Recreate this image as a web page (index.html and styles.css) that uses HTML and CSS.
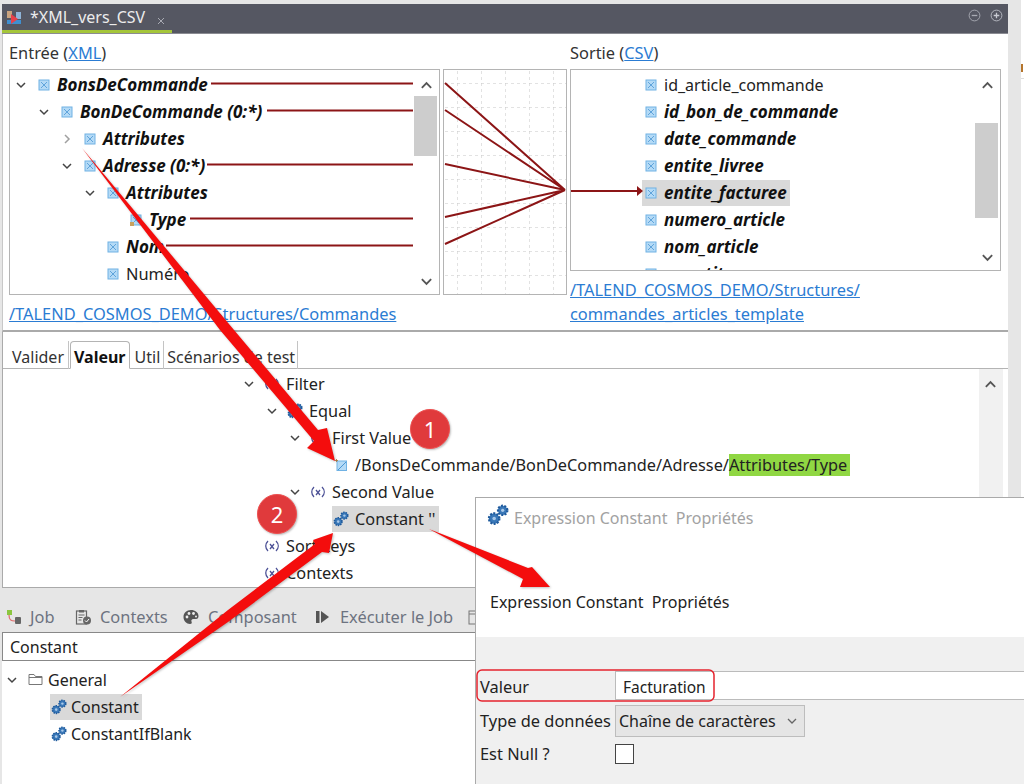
FILE: index.html
```html
<!DOCTYPE html>
<html lang="fr">
<head>
<meta charset="utf-8">
<title>XML_vers_CSV</title>
<link rel="stylesheet" href="styles.css">
</head>
<body>
<svg class="defs" aria-hidden="true">
  <symbol id="i-el" viewBox="0 0 12 12"><rect x="1" y="1" width="10" height="10" fill="#b4daf6" stroke="#70b2e4"/><path d="M3 3l6 6M9 3L3 9" stroke="#4a96d4" stroke-width=".8"/></symbol>
  <symbol id="i-attr" viewBox="0 0 12 12"><rect x="1" y="1" width="10" height="10" fill="#b4daf6" stroke="#70b2e4"/><path d="M3 3l6 6M9 3L3 9" stroke="#4a96d4" stroke-width=".8"/><rect y="8" width="4" height="4" fill="#c9a25e"/></symbol>
  <symbol id="i-leaf" viewBox="0 0 12 12"><rect x="2" y="2" width="9.500" height="9.500" fill="#b4daf6" stroke="#70b2e4"/><path d="M3 11l8-8" stroke="#4a96d4"/><path d="M0 1.500h3M1.500 0v3" stroke="#a8763a" stroke-width=".8"/></symbol>
  <symbol id="i-down" viewBox="0 0 12 12"><path d="M2 4l4 4 4-4" fill="none" stroke="#444" stroke-width="1.5"/></symbol>
  <symbol id="i-right" viewBox="0 0 12 12"><path d="M4 2l4 4-4 4" fill="none" stroke="#a0a0a0" stroke-width="1.5"/></symbol>
  <symbol id="i-gear" viewBox="0 0 16 16"><circle cx="5.200" cy="10.600" r="3.800" fill="#3a78b8" stroke="#1f5a9c" stroke-width="1.600" stroke-dasharray="1.400 1"/><circle cx="5.200" cy="10.600" r="1.300" fill="#a9c8e8"/><circle cx="11.400" cy="4.600" r="3.400" fill="#3a78b8" stroke="#1f5a9c" stroke-width="1.600" stroke-dasharray="1.400 1"/><circle cx="11.400" cy="4.600" r="1.200" fill="#a9c8e8"/></symbol>
  <symbol id="i-var" viewBox="0 0 16 12"><g fill="none" stroke="#4c5196" stroke-width="1.300"><path d="M4 1C1 4 1 8 4 11M12 1c3 3 3 7 0 10"/><path d="M6 4l4 5M10 4L6 9"/></g></symbol>
  <symbol id="i-up" viewBox="0 0 14 10"><path d="M2 8l5-5 5 5" fill="none" stroke="#555" stroke-width="2"/></symbol>
  <symbol id="i-dn" viewBox="0 0 14 10"><path d="M2 2l5 5 5-5" fill="none" stroke="#555" stroke-width="2"/></symbol>
</svg>

<div class="app">
  <div class="main">
    <div class="titlebar">
      <div class="editor-tab">
        <svg class="job-icon" viewBox="0 0 16 16"><rect x="1" y="1" width="5" height="7" fill="#c9a27e"/><rect x="10" y="2" width="5" height="7" fill="#8fb4d8"/><rect x="1" y="10" width="14" height="4" fill="#3f8fd0"/><path d="M5 4l7 5-7 5z" fill="#e8414a"/></svg>
        <span class="tab-name">*XML_vers_CSV</span>
        <svg class="tab-close" viewBox="0 0 8 8"><path d="M1 1l6 6M7 1L1 7" stroke="#a9abb3" stroke-width="1"/></svg>
      </div>
      <div class="win-btns">
        <svg class="win-btn" viewBox="0 0 14 14"><circle cx="7" cy="7" r="5.800" fill="none" stroke="#a8aab2"/><path d="M4 7h6" stroke="#a8aab2" stroke-width="1.400"/></svg>
        <svg class="win-btn" viewBox="0 0 14 14"><circle cx="7" cy="7" r="5.800" fill="none" stroke="#b8bac2"/><path d="M4 7h6M7 4v6" stroke="#c8cad2" stroke-width="1.400"/></svg>
      </div>
    </div>

    <section class="mapper">
      <div class="side side-in">
        <h2 class="side-title">Entrée (<a class="link">XML</a>)</h2>
        <div class="tree-box box-in">
          <div class="rows">
            <div class="row l0 mapped"><svg class="chev"><use href="#i-down"/></svg><div class="item"><svg class="el"><use href="#i-el"/></svg><span>BonsDeCommande</span></div></div>
            <div class="row l1 mapped"><svg class="chev"><use href="#i-down"/></svg><div class="item"><svg class="el"><use href="#i-el"/></svg><span>BonDeCommande (0:*)</span></div></div>
            <div class="row l2 mapped"><svg class="chev"><use href="#i-right"/></svg><div class="item"><svg class="el"><use href="#i-el"/></svg><span>Attributes</span></div></div>
            <div class="row l2 mapped"><svg class="chev"><use href="#i-down"/></svg><div class="item"><svg class="el"><use href="#i-el"/></svg><span>Adresse (0:*)</span></div></div>
            <div class="row l3 mapped"><svg class="chev"><use href="#i-down"/></svg><div class="item"><svg class="el"><use href="#i-el"/></svg><span>Attributes</span></div></div>
            <div class="row l4 mapped"><span class="chev"></span><div class="item"><svg class="el"><use href="#i-attr"/></svg><span>Type</span></div></div>
            <div class="row l3 mapped"><span class="chev"></span><div class="item"><svg class="el"><use href="#i-el"/></svg><span>Nom</span></div></div>
            <div class="row l3"><span class="chev"></span><div class="item"><svg class="el"><use href="#i-el"/></svg><span>Numéro</span></div></div>
          </div>
          <div class="scrollbar">
            <svg class="sb-arrow sb-up"><use href="#i-up"/></svg>
            <div class="thumb thumb-in"></div>
            <svg class="sb-arrow sb-dn"><use href="#i-dn"/></svg>
          </div>
        </div>
        <a class="link path">/TALEND_COSMOS_DEMO/Structures/Commandes</a>
      </div>

      <div class="map-box">
        <svg class="grid" width="122" height="224"><defs><pattern id="cell" width="24" height="24" patternUnits="userSpaceOnUse" x="13" y="13"><path d="M0 0H24M0 0V24" stroke="#c6c6c6" stroke-dasharray="3 3" fill="none"/></pattern></defs><rect width="122" height="224" fill="url(#cell)"/></svg>
      </div>

      <div class="side side-out">
        <h2 class="side-title">Sortie (<a class="link">CSV</a>)</h2>
        <div class="tree-box box-out">
          <div class="rows">
            <div class="row l2 plain"><span class="chev"></span><div class="item"><svg class="el"><use href="#i-el"/></svg><span>id_article_commande</span></div></div>
            <div class="row l2 mapped"><span class="chev"></span><div class="item"><svg class="el"><use href="#i-el"/></svg><span>id_bon_de_commande</span></div></div>
            <div class="row l2 mapped"><span class="chev"></span><div class="item"><svg class="el"><use href="#i-el"/></svg><span>date_commande</span></div></div>
            <div class="row l2 mapped"><span class="chev"></span><div class="item"><svg class="el"><use href="#i-el"/></svg><span>entite_livree</span></div></div>
            <div class="row l2 mapped"><span class="chev"></span><div class="item sel"><svg class="el"><use href="#i-el"/></svg><span>entite_facturee</span></div></div>
            <div class="row l2 mapped"><span class="chev"></span><div class="item"><svg class="el"><use href="#i-el"/></svg><span>numero_article</span></div></div>
            <div class="row l2 mapped"><span class="chev"></span><div class="item"><svg class="el"><use href="#i-el"/></svg><span>nom_article</span></div></div>
            <div class="row l2 mapped"><span class="chev"></span><div class="item"><svg class="el"><use href="#i-el"/></svg><span>quantite</span></div></div>
          </div>
          <div class="scrollbar">
            <svg class="sb-arrow sb-up"><use href="#i-up"/></svg>
            <div class="thumb thumb-out"></div>
            <svg class="sb-arrow sb-dn"><use href="#i-dn"/></svg>
          </div>
        </div>
        <a class="link path path-out">/TALEND_COSMOS_DEMO/Structures/<br>commandes_articles_template</a>
      </div>
    </section>

    <section class="lower">
      <div class="tabs">
        <span class="tab">Valider</span>
        <span class="tab active">Valeur</span>
        <span class="tab tab-util">Util</span>
        <span class="tab tab-scen">Scénarios de test</span>
      </div>
      <div class="lower-body">
        <div class="rows lower-rows">
          <div class="row f0"><svg class="chev"><use href="#i-down"/></svg><div class="item"><svg class="var"><use href="#i-var"/></svg><span>Filter</span></div></div>
          <div class="row f1"><svg class="chev"><use href="#i-down"/></svg><div class="item"><svg class="gear"><use href="#i-gear"/></svg><span>Equal</span></div></div>
          <div class="row f2"><svg class="chev"><use href="#i-down"/></svg><div class="item"><svg class="var"><use href="#i-var"/></svg><span>First Value</span></div></div>
          <div class="row f3"><span class="chev"></span><div class="item"><svg class="el"><use href="#i-leaf"/></svg><span>/BonsDeCommande/BonDeCommande/Adresse/<mark class="hl">Attributes/Type</mark></span></div></div>
          <div class="row f2"><svg class="chev"><use href="#i-down"/></svg><div class="item"><svg class="var"><use href="#i-var"/></svg><span>Second Value</span></div></div>
          <div class="row f3"><span class="chev"></span><div class="item sel"><svg class="gear"><use href="#i-gear"/></svg><span>Constant ''</span></div></div>
          <div class="row f0"><span class="chev"></span><div class="item"><svg class="var"><use href="#i-var"/></svg><span>Sort keys</span></div></div>
          <div class="row f0"><span class="chev"></span><div class="item"><svg class="var"><use href="#i-var"/></svg><span>Contexts</span></div></div>
        </div>
        <div class="lower-scroll"><svg class="sb-arrow sb-up"><use href="#i-up"/></svg></div>
      </div>
    </section>

    <nav class="views">
      <span class="view"><svg class="view-icon" viewBox="0 0 16 16"><rect x="2" y="1" width="5" height="5" fill="#8cc63f"/><path d="M4 6c0 5 2 6 6 6" fill="none" stroke="#e06a6a" stroke-width="1.200"/><rect x="10" y="8" width="6" height="7" rx="1" fill="#666"/></svg>Job</span>
      <span class="view"><svg class="view-icon" viewBox="0 0 16 16"><rect x="1.500" y="2" width="10" height="13" fill="none" stroke="#666" stroke-width="1.200"/><rect x="4" y="1" width="5" height="2.500" fill="#666"/><path d="M3.500 6h6M3.500 8.500h4M3.500 11h3" stroke="#666"/><circle cx="12" cy="11.500" r="4" fill="#666"/><path d="M10 11.500l1.500 1.500 2.500-3" fill="none" stroke="#fff"/></svg>Contexts</span>
      <span class="view"><svg class="view-icon" viewBox="0 0 16 16"><path d="M8 1C3.500 1 .5 4 .5 8s3 7 6.500 7c2 0 2-1.500 1.500-2.500S8.500 10 10.500 10h2.500c2 0 2.500-1.500 2.500-3C15.500 3.500 12 1 8 1z" fill="#555"/><circle cx="4" cy="8" r="1.400" fill="#eee"/><circle cx="6" cy="4.500" r="1.400" fill="#eee"/><circle cx="10.500" cy="4.500" r="1.400" fill="#eee"/><circle cx="13" cy="7.500" r="1" fill="#eee"/></svg>Composant</span>
      <span class="view"><svg class="view-icon" viewBox="0 0 16 16"><rect x="1" y="2" width="3.500" height="12" fill="#555"/><path d="M6 2l8 6-8 6z" fill="#555"/></svg>Exécuter le Job</span>
      <span class="view"><svg class="view-icon" viewBox="0 0 16 16"><rect x="2" y="2" width="11" height="13" fill="none" stroke="#777"/><path d="M2 5h11" stroke="#777"/></svg></span>
    </nav>

    <div class="palette">
      <div class="search">Constant</div>
      <div class="rows palette-rows">
        <div class="row p0"><svg class="chev"><use href="#i-down"/></svg><svg class="folder" viewBox="0 0 15 13"><path d="M1 11.500V1.500h5l1.500 2H14v8z" fill="none" stroke="#777"/><path d="M1 4.500h13" stroke="#777"/></svg><span>General</span></div>
        <div class="row p1"><div class="item sel"><svg class="gear"><use href="#i-gear"/></svg><span>Constant</span></div></div>
        <div class="row p1"><div class="item"><svg class="gear"><use href="#i-gear"/></svg><span>ConstantIfBlank</span></div></div>
      </div>
    </div>
  </div>

  <aside class="edge"><div class="edge-card"><span class="edge-mark"></span><span class="edge-line"></span></div></aside>

  <div class="dialog">
    <header class="dlg-head">
      <div class="dlg-title"><svg class="dlg-icon"><use href="#i-gear"/></svg><span>Expression Constant&nbsp; Propriétés</span></div>
      <div class="dlg-sub">Expression Constant&nbsp; Propriétés</div>
    </header>
    <div class="dlg-form">
      <label class="f-label f-first">Valeur</label>
      <div class="f-input">Facturation</div>
      <label class="f-label">Type de données</label>
      <div class="f-select"><span>Chaîne de caractères</span><svg class="f-chev" viewBox="0 0 12 12"><path d="M2 4l4 4 4-4" fill="none" stroke="#666" stroke-width="1.300"/></svg></div>
      <label class="f-label">Est Null ?</label>
      <div class="f-check"></div>
    </div>
  </div>

  <svg class="annot" width="1024" height="784" viewBox="0 0 1024 784" aria-hidden="true">
    <g class="links">
      <path d="M211 83.500H413M267 110.500H413M207 164.500H413M190 218.500H413M166 245.500H413"/>
      <path d="M445 83L565 190M445 110L565 190M445 164L565 190M445 217L565 190M445 244L565 190"/>
      <path d="M571 191H638"/>
    </g>
    <path class="head" d="M637 186l6 5-6 5z"/>
    <rect class="focus" x="477" y="670" width="237" height="31" rx="5"/>
    <g class="arrows">
      <polygon points="82,148 234,330 318,430 327,428 335,461 307,448 314,441 220,330"/>
      <polygon points="120,697 228,610 315,544 313,540 333,533 329,553 322,552 228,622"/>
      <polygon points="429,529 528,568 532,567 550,587 520,587 523,579"/>
    </g>
  </svg>
  <span class="badge badge-1">1</span>
  <span class="badge badge-2">2</span>
</div>
</body>
</html>
```

FILE: styles.css
```css
* { box-sizing: border-box; }
html, body { margin: 0; padding: 0; }
body { width: 1024px; height: 784px; overflow: hidden; background: #fff; font: 16.4px/20px "Noto Sans", sans-serif; color: #222; }
.defs { position: absolute; width: 0; height: 0; }
.app { position: relative; display: flex; width: 1024px; height: 784px; overflow: hidden; }
.main { width: 1008px; height: 784px; padding-top: 4px; padding-left: 2px; background: #e6e6e6; display: flex; flex-direction: column; }
.edge { flex: 1; background: #e6e6e6; padding-left: 13px; }
.edge-card { height: 100%; background: #fff; position: relative; }
.edge-mark { position: absolute; top: 64px; left: 0; width: 2px; height: 8px; background: #b5752c; }
.edge-line { position: absolute; top: 78px; left: 0; right: 0; height: 1px; background: #ddd; }

.titlebar { height: 30px; background: #555762; display: flex; justify-content: space-between; border-bottom: 1px solid #8a8b92; }
.editor-tab { width: 170px; height: 29px; border-bottom: 3px solid #a5c63a; display: flex; align-items: center; padding-left: 4px; }
.job-icon { width: 16px; height: 16px; margin-top: 2px; }
.tab-name { margin-left: 8px; font-size: 16px; color: #ececec; white-space: nowrap; }
.tab-close { width: 8px; height: 8px; margin: 7px 0 0 12px; }
.win-btns { display: flex; gap: 9px; padding: 5px 5px 0 0; }
.win-btn { width: 13px; height: 13px; }

.mapper { height: 298px; background: #fff; display: flex; padding: 0 0 0 6px; border-left: 1px solid #c8c8c8; border-bottom: 2px solid #aaa; }
.side-title { margin: 0; height: 35px; padding-top: 9px; font: inherit; color: #333; }
.link { color: #2b7cd3; text-decoration: underline; }
.side-in { width: 431px; }
.side-out { width: 431px; margin-left: 3px; }
.tree-box { position: relative; border: 1px solid #b4b4b4; display: flex; overflow: hidden; }
.tree-box .rows { padding-top: 1px; }
.box-in { height: 226px; }
.box-out { height: 202px; }
.path { display: block; margin-top: 9px; white-space: nowrap; line-height: 20px; }
.path-out { margin-top: 7px; line-height: 24px; }
.map-box { width: 124px; height: 226px; margin: 35px 0 0 3px; border: 1px solid #b4b4b4; }
.grid { display: block; }

.rows { flex: 1; min-width: 0; }
.row { height: 27px; display: flex; align-items: center; white-space: nowrap; color: #222; }
.chev { flex: none; width: 16px; height: 12px; display: block; }
.item { height: 26px; display: flex; align-items: center; margin-left: 6px; padding: 0 3px; }
.item.sel { background: #d9d9d9; }
.el { flex: none; width: 12px; height: 12px; margin-right: 7px; }
.var { flex: none; width: 16px; height: 12px; margin: 0 6px 0 -2px; }
.gear { flex: none; width: 16px; height: 16px; margin: 0 6px 0 -2px; }
.mapped { font-style: italic; font-weight: 700; font-size: 17px; color: #111; }
.plain { font-size: 16px; }
.l0 { padding-left: 3px; }
.l1 { padding-left: 26px; }
.l2 { padding-left: 49px; }
.l3 { padding-left: 72px; }
.l4 { padding-left: 95px; }

.scrollbar { flex: none; width: 23px; margin: 1px 2px 1px 0; background: #fff; position: relative; }
.thumb { position: absolute; left: 0; right: 0; background: #cdcdcd; }
.thumb-in { top: 25px; height: 60px; }
.thumb-out { top: 52px; height: 95px; }
.sb-arrow { position: absolute; left: 6px; width: 13px; height: 10px; }
.sb-up { top: 9px; }
.sb-dn { bottom: 6px; }

.lower { height: 256px; background: #fff; border-left: 1px solid #aaa; border-bottom: 1px solid #aaa; display: flex; flex-direction: column; }
.tabs { height: 37px; padding: 9px 0 0 5px; display: flex; border-bottom: 1px solid #b4b4b4; font-size: 16px; }
.tab { height: 28px; padding: 6px 4px 0; margin-right: 1px; border-right: 1px solid #c4c4c4; color: #333; white-space: nowrap; }
.tab.active { font-weight: 700; color: #111; border: 1px solid #b4b4b4; border-bottom: 1px solid #fff; border-radius: 4px 4px 0 0; padding: 5px 3px 0; }
.tab-util { padding-right: 3px; margin-right: 0; }
.tab-scen { padding: 6px 2px 0 3px; }
.lower-body { flex: 1; display: flex; min-height: 0; }
.lower-rows { padding-top: 1px; font-size: 16.3px; }
.lower-rows .el { margin-right: 8px; }
.f0 { padding-left: 238px; }
.f1 { padding-left: 261px; }
.f2 { padding-left: 284px; }
.f3 { padding-left: 307px; }
.hl { background: #90d743; color: #222; padding-right: 3px; }
.lower-scroll { width: 24px; margin-right: 5px; background: #f1f1f1; position: relative; }
.lower-scroll .sb-arrow { left: 5px; top: 10px; }

.views { height: 44px; padding: 19px 0 0 3px; display: grid; grid-template-columns: 70px 108px 132px 152px 1fr; color: #6d7380; }
.view { display: flex; align-items: center; height: 20px; white-space: nowrap; }
.view-icon { flex: none; width: 16px; height: 16px; margin-right: 9px; }

.palette { flex: 1; background: #fff; font-size: 16px; }
.search { height: 29px; background: #fff; border: 1px solid #888; border-right: 0; padding: 4px 7px; }
.palette-rows { padding-top: 5px; }
.p0 { padding-left: 2px; }
.p1 { padding-left: 42px; }
.p1 .gear { margin-right: 4px; }
.folder { flex: none; width: 15px; height: 13px; margin: 0 5px 0 8px; }

.dialog { position: absolute; left: 475px; top: 497px; right: 0; bottom: 0; background: #f0f0f0; border-left: 1px solid #aaa; border-top: 1px solid #aaa; display: flex; flex-direction: column; }
.dlg-head { height: 139px; background: #fff; font-size: 16px; }
.dlg-title { display: flex; align-items: center; padding: 10px 0 0 11px; color: #a2a2a2; }
.dlg-icon { width: 22px; height: 24px; margin: -6px 5px 0 0; }
.dlg-sub { margin: 64px 0 0 14px; color: #222; }
.dlg-form { display: grid; grid-template-columns: 135px 1fr; grid-template-rows: 29px 32px 24px; row-gap: 5px; padding: 34px 0 0 4px; align-items: center; }
.f-label { color: #222; white-space: nowrap; }
.f-first { padding-top: 2px; }
.f-input { height: 29px; background: #fff; border-top: 1px solid #bbb; border-bottom: 1px solid #bbb; border-left: 1px solid #bbb; padding: 5px 7px 0; font-size: 15.5px; }
.f-select { width: 190px; height: 32px; background: #e5e5e5; border: 1px solid #bdbdbd; display: flex; align-items: center; justify-content: space-between; padding: 0 6px 0 3px; font-size: 16px; }
.f-chev { width: 12px; height: 12px; }
.f-check { width: 19px; height: 20px; background: #fff; border: 1px solid #444; }

.annot { position: absolute; left: 0; top: 0; }
.links path { fill: none; stroke: #8c1516; stroke-width: 2; }
.head { fill: #8c1516; }
.focus { fill: none; stroke: #e5232e; stroke-width: 1.5; }
.arrows polygon { fill: #f40d0d; filter: drop-shadow(1px 1px 1px rgba(0,0,0,.25)); }
.badge { position: absolute; width: 40px; height: 40px; border-radius: 50%; background: #e03a3c; border: 1px solid #ee5050; color: #fff; font-size: 22px; line-height: 38px; text-align: center; box-shadow: 1px 1px 2px rgba(0,0,0,.25); }
.badge-1 { left: 410px; top: 409px; }
.badge-2 { left: 257px; top: 494px; }
```
